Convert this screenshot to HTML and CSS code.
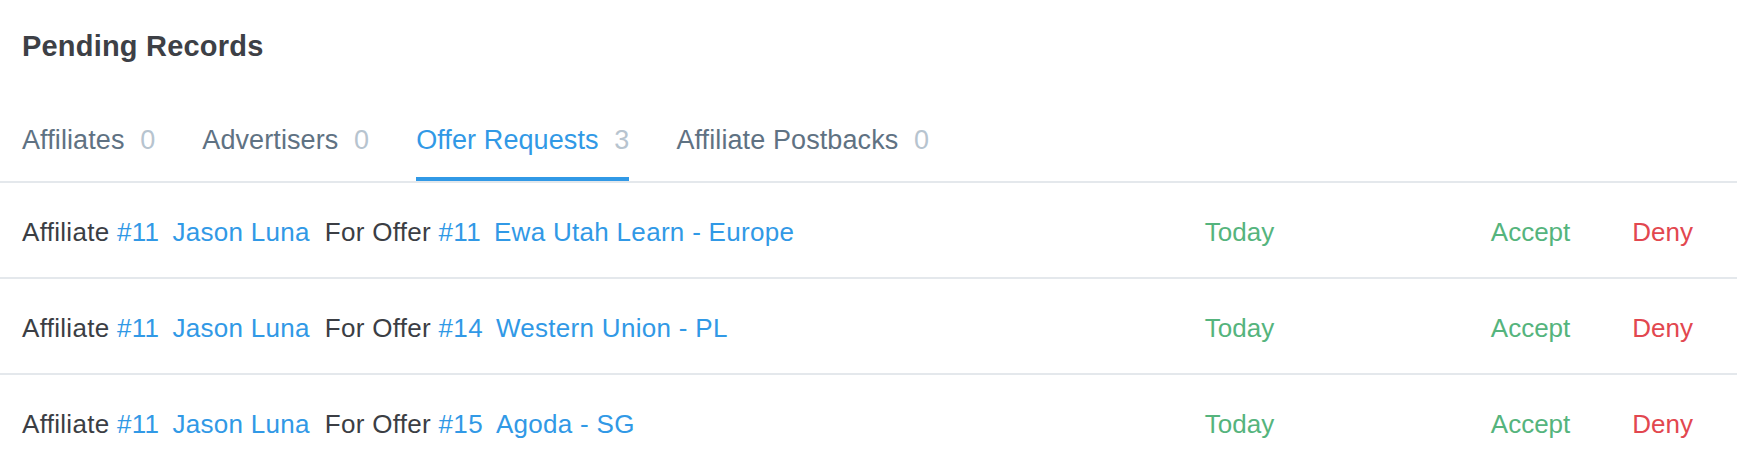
FILE: index.html
```html
<!DOCTYPE html>
<html lang="en">

<head>
    <meta charset="UTF-8">
    <meta name="viewport" content="width=device-width, initial-scale=1.0">
    <title>Pending Records</title>
    <link rel="stylesheet" href="styles.css">
</head>

<body>
    <div class="panel">
        <h1 class="panel-title">Pending Records</h1>
        <div class="tabs">
            <a class="tab" href="#">Affiliates <span class="count">0</span></a>
            <a class="tab" href="#">Advertisers <span class="count">0</span></a>
            <a class="tab active" href="#">Offer Requests <span class="count">3</span></a>
            <a class="tab" href="#">Affiliate Postbacks <span class="count">0</span></a>
        </div>
        <div class="records">
            <div class="record">
                <div class="record-text">
                    Affiliate <a class="id" href="#">#11</a><a class="name" href="#">Jason Luna</a>For Offer <a class="id" href="#">#11</a><a class="name" href="#">Ewa Utah Learn - Europe</a>
                </div>
                <div class="record-date">Today</div>
                <a class="accept" href="#">Accept</a>
                <a class="deny" href="#">Deny</a>
            </div>
            <div class="record">
                <div class="record-text">
                    Affiliate <a class="id" href="#">#11</a><a class="name" href="#">Jason Luna</a>For Offer <a class="id" href="#">#14</a><a class="name" href="#">Western Union - PL</a>
                </div>
                <div class="record-date">Today</div>
                <a class="accept" href="#">Accept</a>
                <a class="deny" href="#">Deny</a>
            </div>
            <div class="record">
                <div class="record-text">
                    Affiliate <a class="id" href="#">#11</a><a class="name" href="#">Jason Luna</a>For Offer <a class="id" href="#">#15</a><a class="name" href="#">Agoda - SG</a>
                </div>
                <div class="record-date">Today</div>
                <a class="accept" href="#">Accept</a>
                <a class="deny" href="#">Deny</a>
            </div>
        </div>
    </div>
</body>
</html>
```

FILE: styles.css
```css
body {
    font-family: "Liberation Sans", Arial, sans-serif;
    background-color: #fff;
    color: #3b3e44;
    margin: 0;
}

a {
    text-decoration: none;
}

.panel-title {
    margin: 0;
    padding: 28px 0 0 22px;
    font-size: 29px;
    line-height: 36px;
    font-weight: bold;
    letter-spacing: 0.2px;
    color: #3d4046;
}

.tabs {
    display: flex;
    margin-top: 61px;
    padding-left: 22px;
    border-bottom: 2px solid #e4e8ec;
}

.tab {
    font-size: 27px;
    line-height: 30px;
    letter-spacing: 0.1px;
    color: #5f7283;
    padding-bottom: 22px;
    border-bottom: 4px solid transparent;
    margin-right: 47px;
}

.tab .count {
    color: #b7c4cf;
    margin-left: 8px;
}

.tab.active {
    color: #3199e6;
    border-bottom-color: #3199e6;
}

.record {
    display: flex;
    align-items: center;
    height: 90px;
    padding: 4px 44px 0 22px;
    border-bottom: 2px solid #e4e8ec;
    font-size: 26px;
}

.record-text {
    flex: 1;
    white-space: nowrap;
    letter-spacing: 0.3px;
}

.record-text a {
    color: #3199e6;
}

.record-text .id {
    margin-right: 13px;
}

.record-text .name {
    margin-right: 15px;
}

.record-date {
    width: 286px;
    color: #55b47d;
}

.accept {
    color: #55b47d;
}

.deny {
    color: #e2474f;
    margin-left: 62px;
}
```
